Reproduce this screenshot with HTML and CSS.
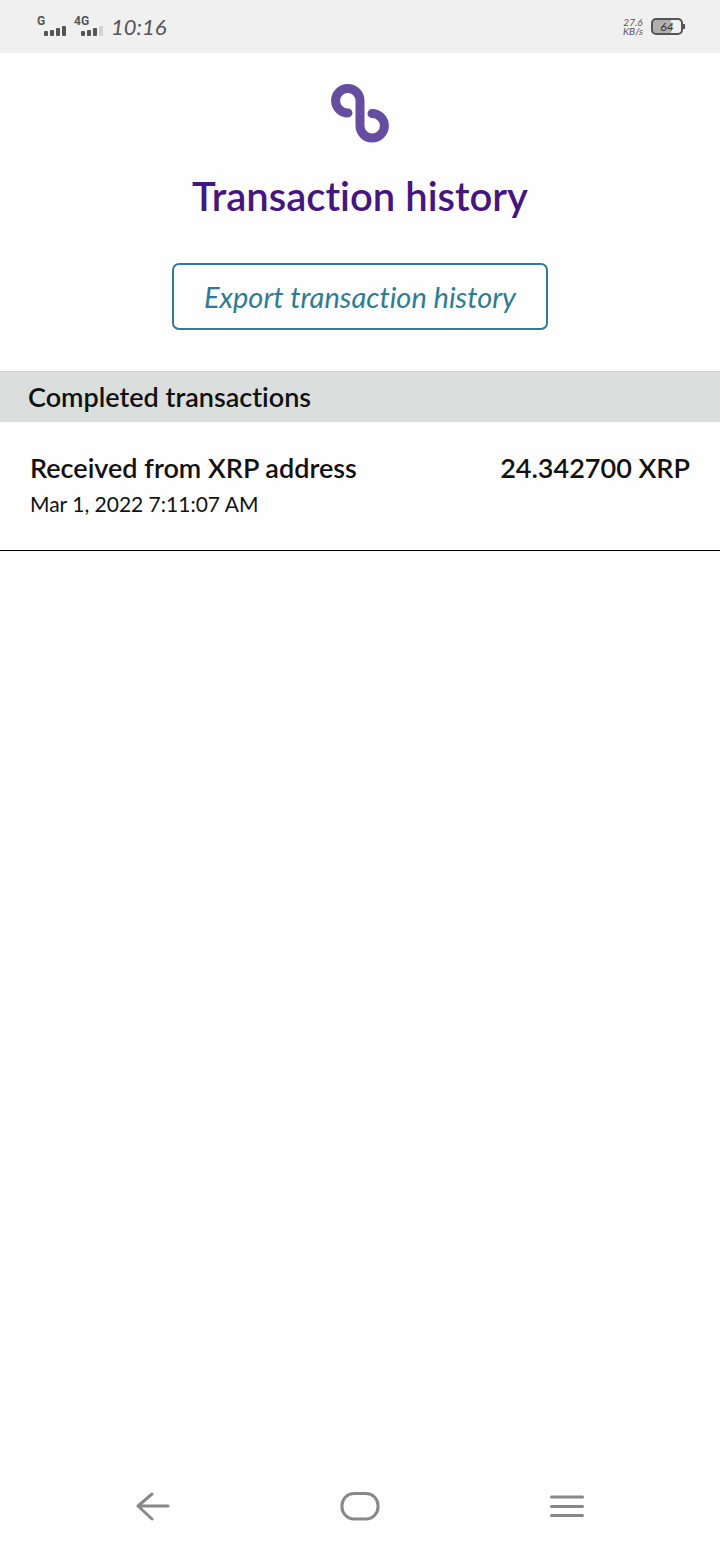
FILE: index.html
```html
<!DOCTYPE html>
<html lang="en">
<head>
    <meta charset="utf-8">
    <meta name="viewport" content="width=device-width, initial-scale=1">
    <title>Transaction history</title>
    <link rel="stylesheet" href="styles.css">
</head>
<body>
    <div class="status-bar">
        <div class="status-left">
            <div class="signal">
                <span>G</span>
                <svg width="22" height="11" viewBox="0 0 22 11" fill="#555">
                    <rect x="0" y="5" width="4" height="5" rx="1"/>
                    <rect x="6" y="4" width="4" height="6" rx="1"/>
                    <rect x="12" y="2" width="4" height="8" rx="1"/>
                    <rect x="18" y="0" width="4" height="10" rx="1"/>
                </svg>
            </div>
            <div class="signal">
                <span>4G</span>
                <svg width="22" height="11" viewBox="0 0 22 11" fill="#555">
                    <rect x="0" y="5" width="4" height="5" rx="1"/>
                    <rect x="6" y="4" width="4" height="6" rx="1"/>
                    <rect x="12" y="2" width="4" height="8" rx="1"/>
                    <rect x="18" y="0" width="4" height="10" rx="1" fill="#d2d2d2"/>
                </svg>
            </div>
            <time class="clock">10:16</time>
        </div>
        <div class="status-right">
            <div class="speed">27.6<br>KB/s</div>
            <div class="battery">64</div>
        </div>
    </div>

    <main>
        <header class="top">
            <svg class="logo" width="60" height="60" viewBox="0 0 60 60" fill="none" stroke="#654da0" stroke-width="9" stroke-linecap="round">
                <path d="M18 29.9A12.2 12.2 0 1 1 30 17.7V42.8A12.2 12.2 0 1 0 42 30.6"/>
            </svg>
            <h1>Transaction history</h1>
            <button type="button" class="export-btn">Export transaction history</button>
        </header>

        <section>
            <h2>Completed transactions</h2>
            <ul class="transactions">
                <li>
                    <div class="info">
                        <h3>Received from XRP address</h3>
                        <p>Mar 1, 2022 7:11:07 AM</p>
                    </div>
                    <span class="amount">24.342700 XRP</span>
                </li>
            </ul>
        </section>
    </main>

    <nav class="nav-bar">
        <button type="button" aria-label="Back">
            <svg width="40" height="32" viewBox="0 0 40 32">
                <path d="M19 4L5 16L19 29M5 16H35"/>
            </svg>
        </button>
        <button type="button" aria-label="Home">
            <svg width="40" height="32" viewBox="0 0 40 32">
                <rect x="2" y="3.5" width="36" height="25.5" rx="12"/>
            </svg>
        </button>
        <button type="button" aria-label="Menu">
            <svg width="40" height="32" viewBox="0 0 40 32">
                <path d="M4.5 7H35.5M4.5 16.5H35.5M4.5 25.5H35.5"/>
            </svg>
        </button>
    </nav>
</body>
</html>
```
FILE: styles.css
```css
* {
    box-sizing: border-box;
}

body {
    font-family: Lato, "Open Sans", sans-serif;
    font-variant-ligatures: none;
    background-color: #fefefe;
    color: #111;
    margin: 0;
    display: flex;
    flex-direction: column;
    min-height: 100vh;
}

h1, h2, h3, p, ul {
    margin: 0;
    padding: 0;
}

main {
    flex: 1;
}

/* status bar */
.status-bar {
    display: flex;
    justify-content: space-between;
    align-items: center;
    height: 53px;
    padding: 0 37px;
    background-color: #f0f0f0;
    color: #555;
}

.status-left {
    display: flex;
    align-items: center;
    gap: 8px;
}

.signal {
    display: flex;
    flex-direction: column;
    align-items: flex-start;
    font-family: Roboto, sans-serif;
    font-size: 12px;
    font-weight: bold;
    line-height: 9px;
}

.signal svg {
    margin-left: 7px;
}

.clock {
    font-size: 22px;
    font-style: italic;
}

.status-right {
    display: flex;
    align-items: center;
    gap: 8px;
}

.speed {
    font-size: 10px;
    font-style: italic;
    line-height: 9px;
    text-align: center;
}

.battery {
    position: relative;
    width: 32px;
    height: 17px;
    border: 2px solid #555;
    border-radius: 5px;
    background: linear-gradient(to right, #b0b0b0 64%, #f0f0f0 64%);
    color: #333;
    font-size: 12px;
    font-style: italic;
    line-height: 13px;
    text-align: center;
}

.battery::after {
    content: "";
    position: absolute;
    top: 4px;
    right: -4px;
    width: 2px;
    height: 5px;
    background-color: #555;
}

/* page header */
.top {
    display: flex;
    flex-direction: column;
    align-items: center;
    padding: 30px 28px 41px;
}

h1 {
    margin-top: 27px;
    color: #45177c;
    font-size: 40px;
    font-weight: 600;
    line-height: 52px;
}

.export-btn {
    margin-top: 41px;
    padding: 0 30px;
    height: 67px;
    border: 2px solid #2f7b94;
    border-radius: 7px;
    background-color: transparent;
    color: #2f7b94;
    font-family: inherit;
    font-size: 29px;
    font-style: italic;
    font-variant-ligatures: none;
    cursor: pointer;
}

/* transactions */
h2 {
    padding: 0 28px;
    border-top: 1px solid #ccc;
    background-color: #dadfdd;
    font-size: 27px;
    font-weight: 600;
    line-height: 50px;
}

.transactions {
    list-style: none;
}

.transactions li {
    display: flex;
    justify-content: space-between;
    gap: 20px;
    padding: 28px 30px;
    border-bottom: 1px solid #000;
}

h3, .amount {
    font-size: 27px;
    font-weight: 600;
    line-height: 36px;
}

.info p {
    font-size: 21px;
    line-height: 36px;
}

/* navigation */
.nav-bar {
    display: grid;
    grid-template-columns: repeat(3, 1fr);
    padding: 0 50px 22px;
}

.nav-bar button {
    height: 32px;
    padding: 0;
    border: none;
    background: none;
    cursor: pointer;
}

.nav-bar svg {
    fill: none;
    stroke: #888;
    stroke-width: 3;
    stroke-linecap: round;
    stroke-linejoin: round;
}
```
